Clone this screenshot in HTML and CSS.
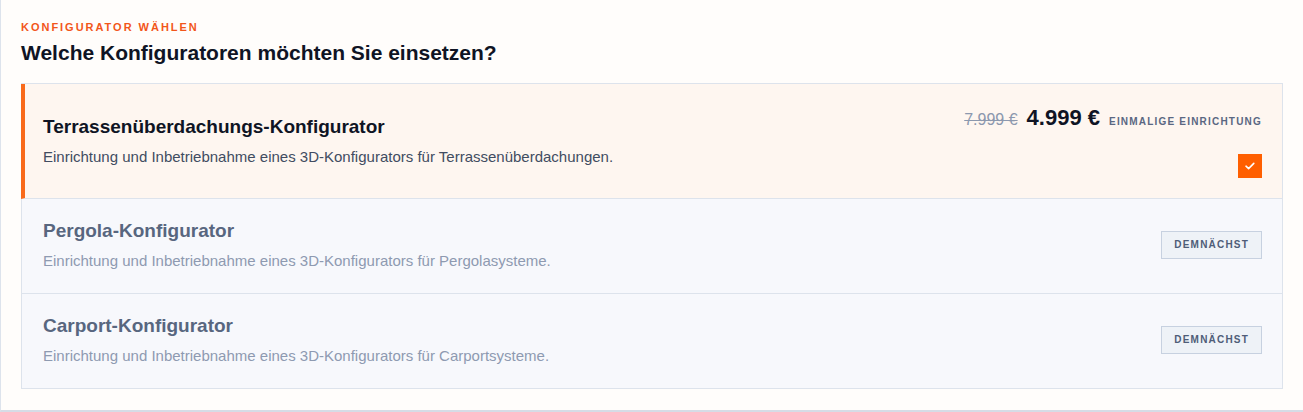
FILE: index.html
```html
<!DOCTYPE html>
<html lang="de">
<head>
<meta charset="utf-8">
<title>Konfigurator wählen</title>
<link rel="stylesheet" href="styles.css">
</head>
<body>
<section class="card">
  <div class="eyebrow">Konfigurator wählen</div>
  <h2 class="heading">Welche Konfiguratoren möchten Sie einsetzen?</h2>
  <div class="list">
    <div class="row row--selected">
      <div class="info">
        <div class="title">Terrassenüberdachungs-Konfigurator</div>
        <div class="desc">Einrichtung und Inbetriebnahme eines 3D-Konfigurators für Terrassenüberdachungen.</div>
      </div>
      <div class="side">
        <div class="price">
          <span class="old">7.999 €</span>
          <span class="new">4.999 €</span>
          <span class="note">Einmalige Einrichtung</span>
        </div>
        <div class="check">
          <svg width="12" height="10" viewBox="0 0 12 10"><polyline points="2,5.2 4.6,7.6 9.8,2.4" fill="none" stroke="#fff" stroke-width="1.6" stroke-linecap="round" stroke-linejoin="round"/></svg>
        </div>
      </div>
    </div>
    <div class="row row--disabled">
      <div class="info">
        <div class="title">Pergola-Konfigurator</div>
        <div class="desc">Einrichtung und Inbetriebnahme eines 3D-Konfigurators für Pergolasysteme.</div>
      </div>
      <div class="side">
        <span class="badge">Demnächst</span>
      </div>
    </div>
    <div class="row row--disabled">
      <div class="info">
        <div class="title">Carport-Konfigurator</div>
        <div class="desc">Einrichtung und Inbetriebnahme eines 3D-Konfigurators für Carportsysteme.</div>
      </div>
      <div class="side">
        <span class="badge">Demnächst</span>
      </div>
    </div>
  </div>
</section>
</body>
</html>
```

FILE: styles.css
```css
* { box-sizing: border-box; }
html, body { margin: 0; padding: 0; background: #fffdfb; }
body { font-family: "Liberation Sans", Arial, Helvetica, sans-serif; color: #0f1424; }

.card {
  background: #fffdfb;
  border-left: 1px solid #dde3ec;
  border-bottom: 2px solid #d6dce6;
  padding: 20px 20px 21px 20px;
}

.eyebrow {
  font-size: 11px;
  line-height: 14px;
  font-weight: 700;
  letter-spacing: 0.18em;
  text-transform: uppercase;
  color: #f2561a;
}

.heading {
  margin: 5px 0 0;
  font-size: 21px;
  line-height: 28px;
  font-weight: 700;
  color: #0f1424;
}

.list {
  margin-top: 16px;
  border: 1px solid #dde3ec;
}

.row {
  display: flex;
  align-items: center;
  justify-content: space-between;
  padding: 20px 20px 22px 21px;
  border-bottom: 1px solid #dde3ec;
}
.row:last-child { border-bottom: 0; }

.row--selected {
  background: #fef6f0;
  border-left: 4px solid #f96a1b;
  margin-left: -1px;
  padding: 21px 20px 20px 18px;
}
.row--selected .info { margin-top: -2px; }
.row--disabled { background: #f7f8fc; }

.info { display: flex; flex-direction: column; gap: 7px; }
.title { font-size: 19px; line-height: 24px; font-weight: 700; }
.desc { font-size: 15px; line-height: 21px; color: #414c61; }

.row--disabled .title { color: #58667f; }
.row--disabled .desc { color: #8e9ab1; }

.side { display: flex; flex-direction: column; align-items: flex-end; gap: 21px; }

.price { display: flex; align-items: baseline; gap: 9px; height: 28px; }
.old { font-size: 16px; color: #8c98ae; text-decoration: line-through; }
.new { font-size: 22px; font-weight: 700; color: #0f1424; }
.note {
  font-size: 10px;
  font-weight: 700;
  letter-spacing: 0.12em;
  text-transform: uppercase;
  color: #5a6782;
}

.check {
  width: 24px;
  height: 24px;
  background: #ff5f00;
  display: flex;
  align-items: center;
  justify-content: center;
}

.badge {
  display: inline-block;
  height: 28px;
  line-height: 26px;
  padding: 0 12px;
  border: 1px solid #c7d1e0;
  background: #eef2f7;
  font-size: 10px;
  font-weight: 700;
  letter-spacing: 0.12em;
  text-transform: uppercase;
  color: #4f5d78;
}
```
